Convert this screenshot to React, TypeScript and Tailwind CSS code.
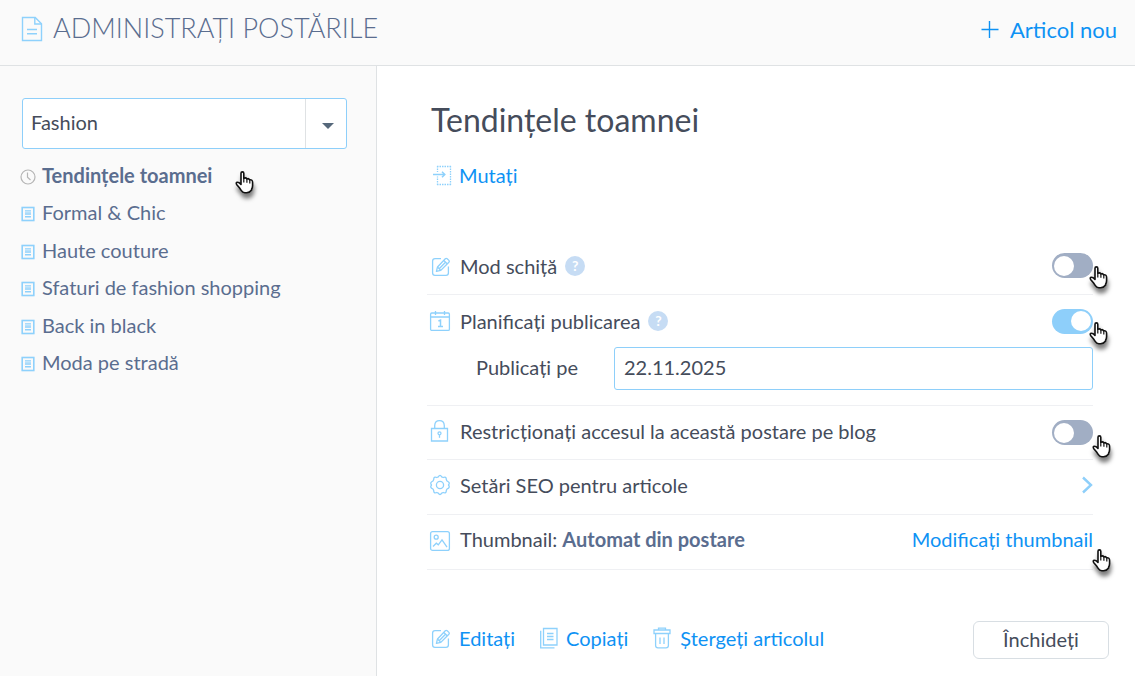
import React, { useState } from 'react';

const posts = [
  'Tendințele toamnei',
  'Formal & Chic',
  'Haute couture',
  'Sfaturi de fashion shopping',
  'Back in black',
  'Moda pe stradă'
];

function HandCursor({ className }: { className: string }) {
  return (
    <svg
      aria-hidden="true"
      width="19"
      height="23"
      viewBox="0 0 19 23"
      className={`pointer-events-none absolute z-10 drop-shadow-[1px_5px_2px_rgba(0,0,0,0.5)] ${className}`}
    >
      <path
        d="M6 2.2Q6 .9 7.4.9T8.8 2.2V7.2Q10.9 6.2 11.9 7.9Q13.8 7.1 14.6 8.8Q17.6 8.4 17.6 11.4V14.6Q17.6 16.6 16.6 18.2V19Q14.6 21.8 11.6 21.8H9.8Q7.6 21.6 6.2 19.4L4.4 16.8L1.6 13.4Q.6 11.4 2.4 11.2Q4.2 11.2 6 13.4Z"
        fill="#fff"
        stroke="#111"
        strokeWidth="1.6"
        strokeLinejoin="round"
      />
      <path d="M8.8 7v4.4M11.9 8v3.8M14.8 8.8v3.6" fill="none" stroke="#111" strokeWidth="1.2" />
    </svg>
  );
}

function DocumentIcon() {
  return (
    <svg aria-hidden="true" width="22" height="26" viewBox="0 0 22 26" fill="none" stroke="#8ed1fc" strokeWidth="1.4">
      <path d="M1.5 1.5H14.2L20.5 7.8V24.5H1.5Z" />
      <path d="M13.8 1.8V8H20.2M6 13.5H16M6 17.7H16" />
    </svg>
  );
}

function ClockIcon() {
  return (
    <svg aria-hidden="true" width="16" height="16" viewBox="0 0 16 16" fill="none" stroke="#b5b5b5" strokeWidth="1.2" className="mt-0.5 shrink-0">
      <circle cx="8" cy="8" r="7" />
      <path d="M7.5 3.5V8.2L10.5 11" />
    </svg>
  );
}

function PostIcon() {
  return (
    <svg aria-hidden="true" width="16" height="16" viewBox="0 0 16 16" fill="none" stroke="#8ed1fc" className="mt-0.5 shrink-0">
      <rect x="2.2" y="1.5" width="11.6" height="13" strokeWidth="1.6" />
      <path d="M5 4.9h6M5 8h6M5 10.8h6" strokeWidth="1.4" />
      <path d="M5 6.5h6" strokeWidth="1" opacity=".6" />
    </svg>
  );
}

function MoveIcon() {
  return (
    <svg aria-hidden="true" width="22" height="22" viewBox="0 0 22 22" fill="none" stroke="#8ed1fc">
      <path d="M6 2.5H20M19.5 2V21M20 20.5H6M6.5 21V12.5M6.5 2V8" strokeWidth="1.3" strokeDasharray="1.5 1" />
      <path d="M2 10.5H13.5M11 7.8L13.8 10.5L11 13.2" strokeWidth="1.5" />
    </svg>
  );
}

function EditIcon() {
  return (
    <svg aria-hidden="true" width="22" height="22" viewBox="0 0 22 22" fill="none" stroke="#8ed1fc" strokeWidth="1.3" strokeLinejoin="round">
      <path d="M11 3.6H5Q2.6 3.6 2.6 6V18Q2.6 20.4 5 20.4H16Q18.4 20.4 18.4 18V11.5" />
      <path d="M6.4 16.4L7.5 12L15.3 3.8Q16.2 2.9 17.2 3.8L18.9 5.4Q19.8 6.3 18.9 7.2L10.8 15.4Z" />
      <path d="M13.8 5.5L17.2 8.8M7.5 12L10.8 15.4M9.2 13.7L15.5 7.2" />
    </svg>
  );
}

function CalendarIcon() {
  return (
    <svg aria-hidden="true" width="22" height="22" viewBox="0 0 22 22" fill="none" stroke="#8ed1fc" strokeWidth="1.3">
      <rect x="1.6" y="3" width="18.8" height="17.4" rx="1.2" />
      <path d="M1.6 7H20.4M6.5 1V5M15.5 1V5" />
      <path d="M9.4 11L11.5 10.2V16.4M9 16.4H14" strokeWidth="1.5" />
    </svg>
  );
}

function LockIcon() {
  return (
    <svg aria-hidden="true" width="22" height="24" viewBox="0 0 22 24" fill="none" stroke="#8ed1fc" strokeWidth="1.3">
      <path d="M2.5 9.5H18.5V22H2.5ZM5.7 9.5V6.5Q6 1.7 10.5 1.7T15.3 6.5V9.5" />
      <circle cx="10.5" cy="14.3" r="1.5" />
      <path d="M10.5 15.8V18.8" />
    </svg>
  );
}

function GearIcon() {
  return (
    <svg aria-hidden="true" width="22" height="22" viewBox="0 0 22 22" fill="none" stroke="#8ed1fc" strokeWidth="1.3" strokeLinejoin="round">
      <path d="M9.3 2.9Q11 0 12.7 2.9L14.2 3.5Q17.4 2.2 17.3 5.4L18 7Q21.6 8.4 19.5 11Q21.6 13.6 18 15L17.3 16.6Q17.4 19.8 14.2 18.5L12.7 19.1Q11 22 9.3 19.1L7.8 18.5Q4.6 19.8 4.7 16.6L4 15Q.4 13.6 2.5 11Q.4 8.4 4 7L4.7 5.4Q4.6 2.2 7.8 3.5Z" />
      <circle cx="11" cy="11" r="3.6" />
    </svg>
  );
}

function ImageIcon() {
  return (
    <svg aria-hidden="true" width="22" height="22" viewBox="0 0 22 22" fill="none" stroke="#8ed1fc" strokeWidth="1.3">
      <rect x="1.6" y="1.6" width="18.8" height="18.8" rx="2" />
      <circle cx="7.2" cy="7.2" r="2" />
      <path d="M4 16.5L7.3 13.2L9.3 14.8L13 9.8L18 17.2" />
    </svg>
  );
}

function CopyIcon() {
  return (
    <svg aria-hidden="true" width="20" height="22" viewBox="0 0 20 22" fill="none" stroke="#8ed1fc" strokeWidth="1.3">
      <path d="M4.5 1.5H18V18H4.5ZM1.7 3.8V20.8H15.5" />
      <path d="M8 6.5H14.5M8 9.5H14.5M8 12.5H14.5" />
    </svg>
  );
}

function TrashIcon() {
  return (
    <svg aria-hidden="true" width="20" height="22" viewBox="0 0 20 22" fill="none" stroke="#8ed1fc" strokeWidth="1.3">
      <path d="M2 3H18V6.5H2ZM6.5 3V1.2H13.5V3M3.6 6.5V18.5Q3.6 20.8 6 20.8H14Q16.4 20.8 16.4 18.5V6.5M8 10.5V17M12 10.5V17" />
    </svg>
  );
}

function Help() {
  return (
    <button type="button" aria-label="Ajutor" className="flex h-5 w-5 items-center justify-center rounded-full bg-[#c6dcf4] text-sm leading-5 font-bold text-white">
      ?
    </button>
  );
}

interface ToggleProps {
  id: string;
  checked: boolean;
  onChange: (value: boolean) => void;
  cursor: string;
}

function Toggle({ id, checked, onChange, cursor }: ToggleProps) {
  return (
    <div className="relative ml-auto flex">
      <input
        id={id}
        type="checkbox"
        role="switch"
        checked={checked}
        onChange={(e) => onChange(e.target.checked)}
        className="flex h-[25px] w-[41px] cursor-pointer appearance-none items-center rounded-full bg-[#a1aec4] px-0.5 before:h-5 before:w-5 before:rounded-full before:bg-white checked:justify-end checked:bg-[#8ecffa]"
      />
      <HandCursor className={cursor} />
    </div>
  );
}

export default function App() {
  const [selected, setSelected] = useState(posts[0]);
  const [draft, setDraft] = useState(false);
  const [scheduled, setScheduled] = useState(true);
  const [restricted, setRestricted] = useState(false);
  const [date, setDate] = useState('22.11.2025');

  return (
    <div className="flex min-h-screen flex-col bg-white font-['Lato','Open_Sans',sans-serif] text-xl leading-6 text-[#454c5b]">
      <header className="flex h-[66px] items-center justify-between border-b border-[#dfe2e4] bg-[#fafafa] pr-[18px] pb-[7px] pl-[21px]">
        <div className="flex items-center gap-[10px]">
          <DocumentIcon />
          <h1 className="pb-0.5 text-[27px] leading-8 font-light text-[#5a6d8f]">ADMINISTRAȚI POSTĂRILE</h1>
        </div>
        <button type="button" className="mt-0.5 flex items-center gap-[11px] text-[22px] text-[#0e92f4]">
          <svg aria-hidden="true" width="18" height="18" viewBox="0 0 18 18" stroke="currentColor" strokeWidth="1.4">
            <path d="M.5 8.5H17.5M8.5 0V17" />
          </svg>
          Articol nou
        </button>
      </header>

      <div className="flex grow">
        <aside className="w-[377px] shrink-0 border-r border-[#dfe2e4] bg-[#fafafa] pt-8 pr-[29px] pl-5">
          <div className="relative ml-0.5">
            <select
              aria-label="Categorie"
              className="h-[51px] w-full appearance-none rounded-[3px] border border-[#8ecffa] bg-white pb-[3px] pl-2"
            >
              <option>Fashion</option>
            </select>
            <span className="pointer-events-none absolute inset-y-px right-px flex w-[41px] items-center justify-center border-l border-[#dfe2e4]">
              <svg aria-hidden="true" width="12" height="6" viewBox="0 0 12 6" className="mt-1 ml-1 fill-[#56687b]">
                <path d="M0 0H12L6 6Z" />
              </svg>
            </span>
          </div>

          <ul className="mt-2 grid h-[225px] auto-rows-fr">
            {posts.map(post => (
              <li key={post} className="flex">
                <button
                  type="button"
                  onClick={() => setSelected(post)}
                  className={`relative flex items-center gap-1.5 text-[#5a6d8f] ${post === selected ? 'font-bold' : ''}`}
                >
                  {post === posts[0] ? <ClockIcon /> : <PostIcon />}
                  <span className="pb-0.5">{post}</span>
                  {post === posts[0] && <HandCursor className="top-3.5 left-[215px]" />}
                </button>
              </li>
            ))}
          </ul>
        </aside>

        <main className="min-w-0 grow pt-8 pr-[26px] pl-[50px]">
          <h2 className="ml-1 text-[32px] leading-[44px]">{selected}</h2>
          <button type="button" className="mt-[21px] ml-1 flex items-center gap-1.5 text-[#0e92f4]">
            <MoveIcon />
            Mutați
          </button>

          <form className="mt-[52px] mr-4" onSubmit={(e) => e.preventDefault()}>
            <div className="flex h-14 items-center gap-2 border-b border-[#eff0f3] pb-0.5 pl-[3px]">
              <div className="flex items-center gap-2">
                <EditIcon />
                <label htmlFor="draft">Mod schiță</label>
              </div>
              <Help />
              <Toggle id="draft" checked={draft} onChange={setDraft} cursor="top-[13px] left-[37px]" />
            </div>

            <div className="border-b border-[#eff0f3] pb-[15px] pl-0.5">
              <div className="flex h-[52px] items-center gap-2">
                <div className="flex items-center gap-[9px]">
                  <CalendarIcon />
                  <label htmlFor="schedule">Planificați publicarea</label>
                </div>
                <Help />
                <Toggle id="schedule" checked={scheduled} onChange={setScheduled} cursor="top-[13px] left-[37px]" />
              </div>
              {scheduled && (
                <div className="flex items-center pl-[47px]">
                  <label htmlFor="publish-date" className="w-[138px] shrink-0 pb-1">Publicați pe</label>
                  <input
                    id="publish-date"
                    type="text"
                    value={date}
                    onChange={(e) => setDate(e.target.value)}
                    className="h-[43px] min-w-0 grow rounded-[3px] border border-[#8ecffa] px-[9px] pb-1"
                  />
                </div>
              )}
            </div>

            <div className="flex h-[54px] items-center border-b border-[#eff0f3] pl-0.5">
              <div className="flex items-center gap-[9px] pb-1">
                <LockIcon />
                <label htmlFor="restrict">Restricționați accesul la această postare pe blog</label>
              </div>
              <Toggle id="restrict" checked={restricted} onChange={setRestricted} cursor="top-[15px] left-10" />
            </div>

            <button type="button" className="flex h-[55px] w-full items-center gap-[9px] border-b border-[#eff0f3] pb-1 pl-0.5 text-left">
              <GearIcon />
              Setări SEO pentru articole
              <svg aria-hidden="true" width="12" height="18" viewBox="0 0 12 18" fill="none" stroke="#8ecffa" strokeWidth="2.4" className="ml-auto">
                <path d="M2 1.5L10 9L2 16.5" />
              </svg>
            </button>

            <div className="flex h-[55px] items-center gap-[9px] border-b border-[#eff0f3] pb-0.5 pl-0.5">
              <ImageIcon />
              <p className="pb-1">
                Thumbnail: <strong className="text-[#5a6d8f]">Automat din postare</strong>
              </p>
              <button type="button" className="relative ml-auto pb-1 text-[#0e92f4]">
                Modificați thumbnail
                <HandCursor className="top-[22px] -right-[18px]" />
              </button>
            </div>
          </form>

          <footer className="mt-[51px] flex items-center pl-[3px]">
            <div className="flex items-center gap-6 pb-1 text-[#0e92f4]">
              <button type="button" className="flex items-center gap-[7px]">
                <EditIcon />
                Editați
              </button>
              <button type="button" className="flex items-center gap-[7px]">
                <CopyIcon />
                Copiați
              </button>
              <button type="button" className="flex items-center gap-2">
                <TrashIcon />
                Ștergeți articolul
              </button>
            </div>
            <button type="button" className="ml-auto h-[38px] w-[136px] rounded-md border border-[#d8dee3] pb-0.5">
              Închideți
            </button>
          </footer>
        </main>
      </div>
    </div>
  );
}
